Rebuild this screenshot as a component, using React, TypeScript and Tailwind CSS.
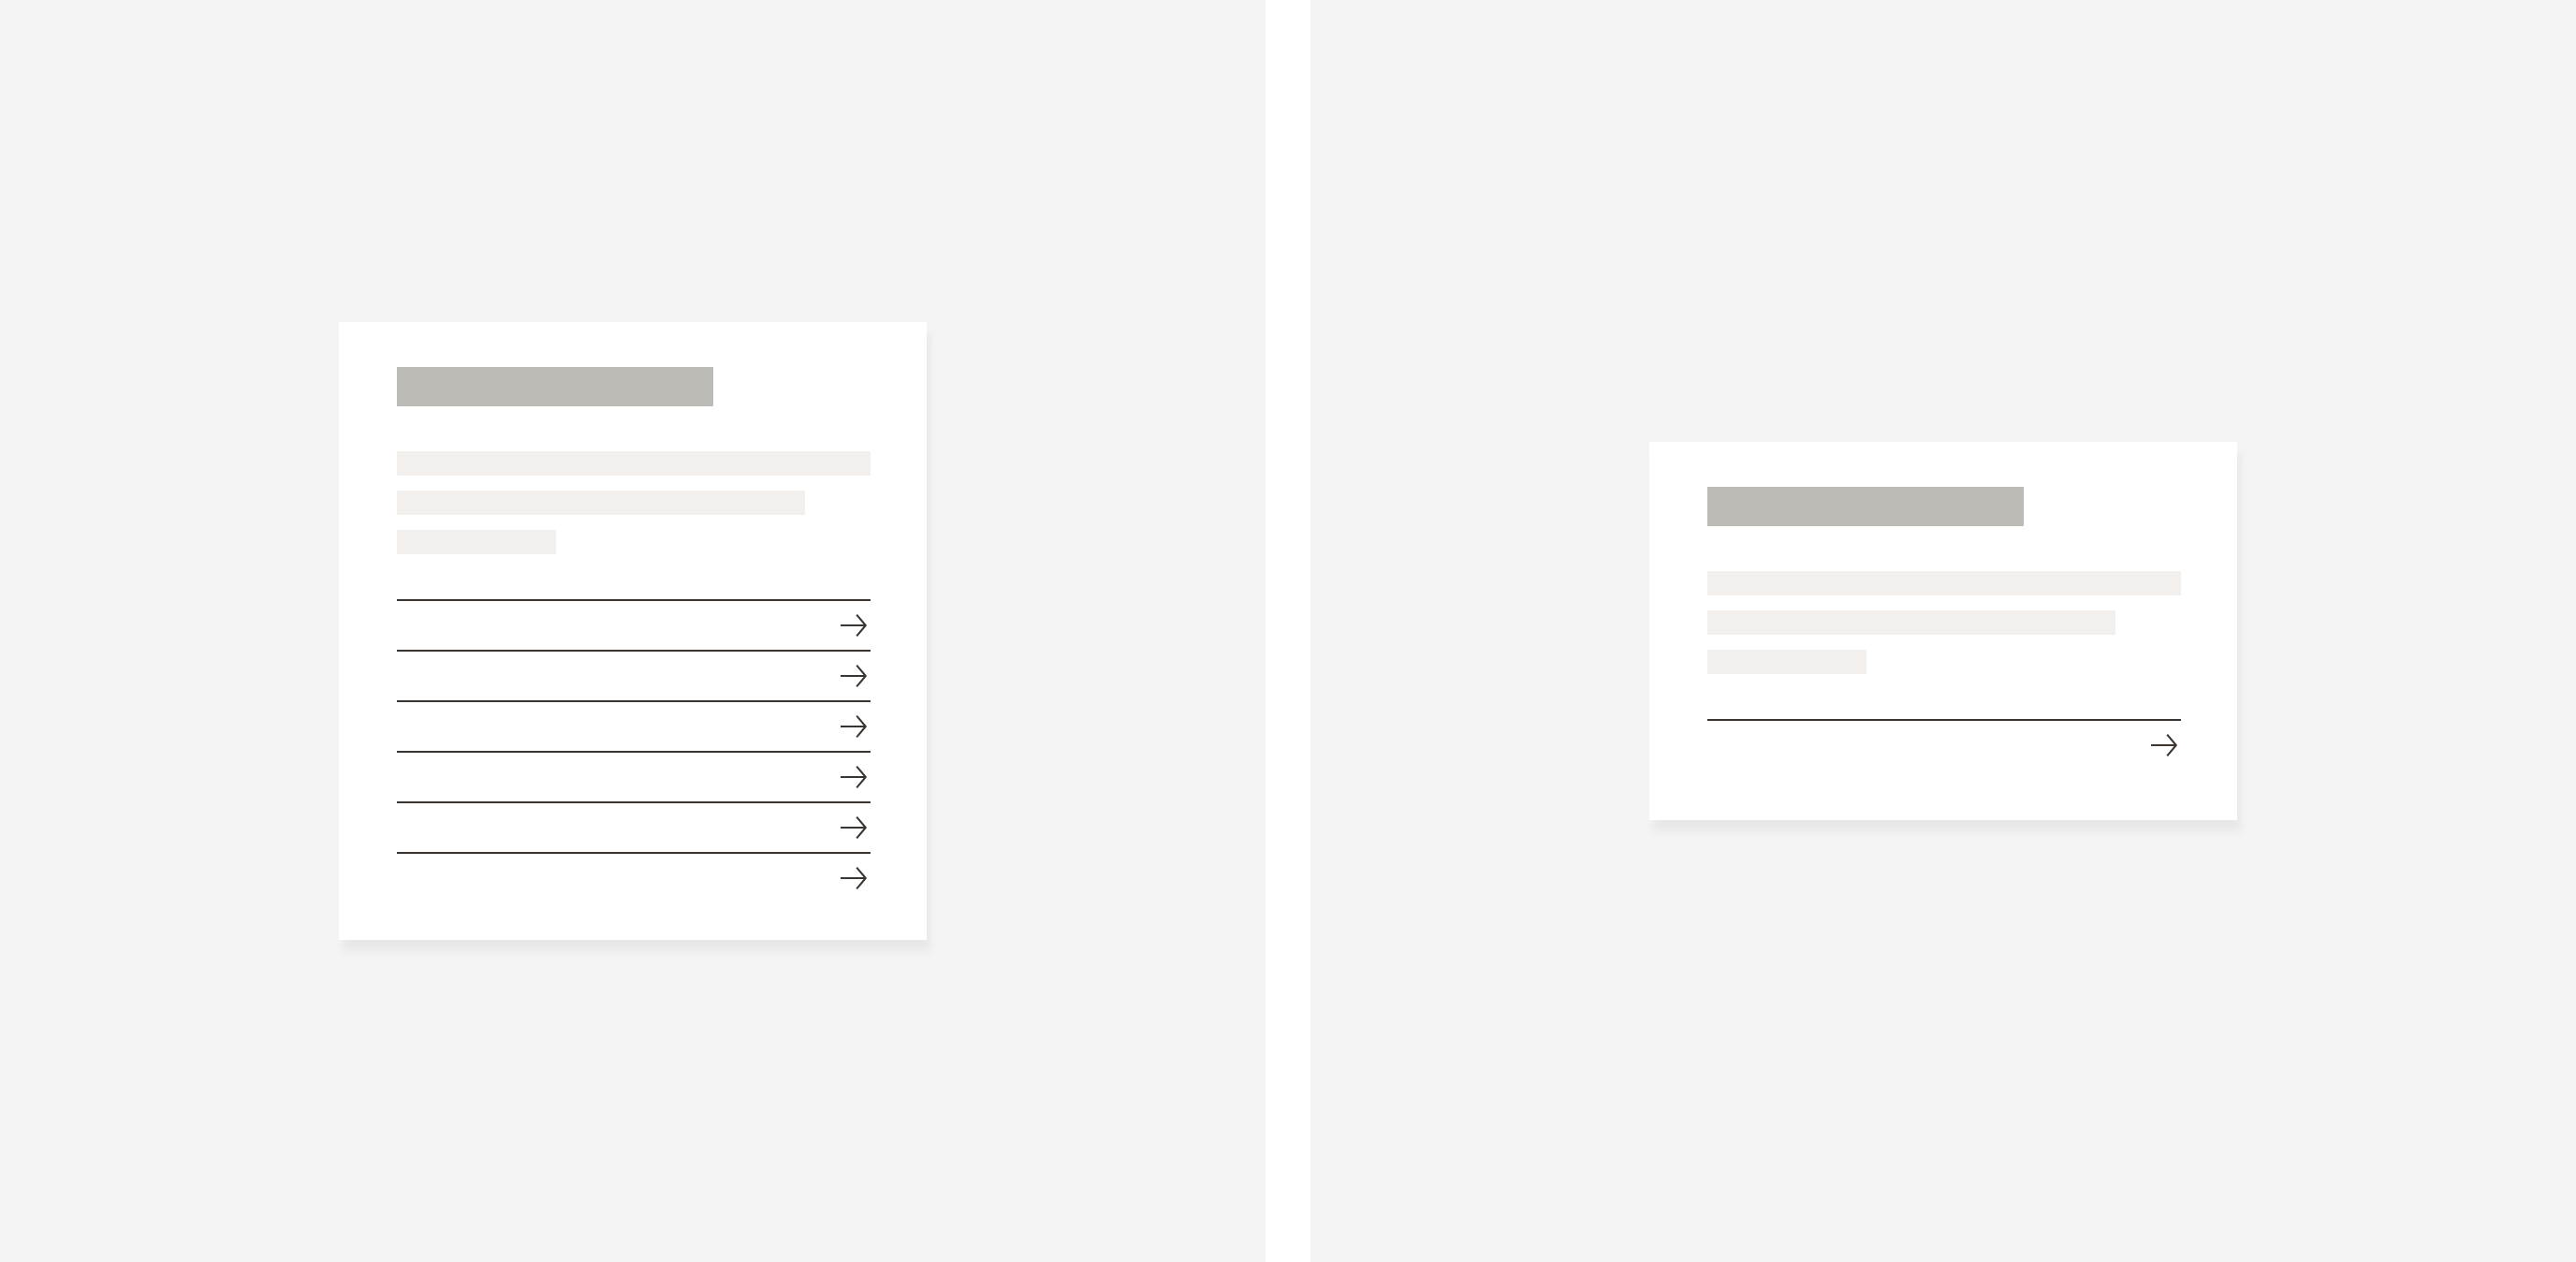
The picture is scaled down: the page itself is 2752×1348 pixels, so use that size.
interface CardProps {
  label: string;
  rows: number;
}

function ArrowIcon() {
  return (
    <svg
      className="w-7 h-6"
      viewBox="0 0 28 24"
      fill="none"
      stroke="currentColor"
      strokeWidth="2"
      strokeLinejoin="round"
      aria-hidden="true"
    >
      <path d="M0 12h27" />
      <path d="M17.2 0.7 26.8 12l-9.6 11.3" />
    </svg>
  );
}

function Card({ label, rows }: CardProps) {
  return (
    <article
      aria-label={label}
      className="w-[628px] max-w-full min-h-[404px] bg-white pt-12 pb-10 pl-[62px] pr-[60px] shadow-[4px_12px_8px_rgba(0,0,0,0.05)]"
    >
      {/* Title */}
      <div className="h-[42px] w-[338px] max-w-full bg-[#bcbbb6]" />

      {/* Body copy */}
      <div className="mt-12 flex flex-col gap-4">
        <div className="h-[26px] w-full bg-[#f3efec]" />
        <div className="h-[26px] w-[436px] max-w-full bg-[#f3efec]" />
        <div className="h-[26px] w-[170px] max-w-full bg-[#f3efec]" />
      </div>

      {/* Links */}
      <ul className="mt-12">
        {Array.from({ length: rows }, (_, idx) => (
          <li key={idx} className="border-t-2 border-[#3b3532]">
            <a
              href="#"
              aria-label={`Link ${idx + 1}`}
              className="flex h-[52px] items-center justify-end pr-1 text-[#3b3532]"
            >
              <ArrowIcon />
            </a>
          </li>
        ))}
      </ul>
    </article>
  );
}

const cards: CardProps[] = [
  { label: "Card with several links", rows: 6 },
  { label: "Card with one link", rows: 1 },
];

export default function App() {
  return (
    <main className="flex min-h-screen gap-12 bg-white">
      {cards.map((card) => (
        <section key={card.label} className="flex flex-1 items-center justify-center bg-[#f4f4f4]">
          <Card {...card} />
        </section>
      ))}
    </main>
  );
}
